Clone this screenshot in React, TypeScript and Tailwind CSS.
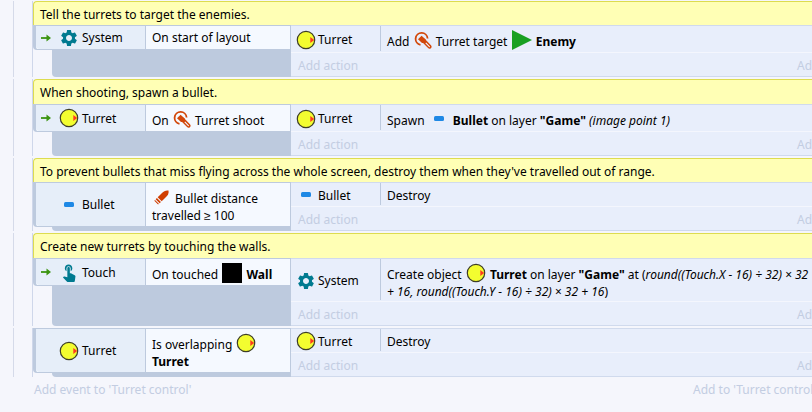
import type { ReactNode } from "react";
import { MdSettings, MdTouchApp } from "react-icons/md";

const inlineIcon = "mx-px -my-1 align-baseline";

function TurretIcon({ className = "" }: { className?: string }) {
  return (
    <svg viewBox="0 0 20 20" className={`inline-block size-5 shrink-0 ${className}`}>
      <circle cx="10" cy="10" r="8.7" fill="#f3fd30" stroke="#3d3d28" strokeWidth="1.2" />
      <path d="M14.3 7v6l4-3z" fill="#ff3b1f" />
    </svg>
  );
}

function BulletIcon({ className = "" }: { className?: string }) {
  return (
    <svg viewBox="0 0 20 20" className={`inline-block size-5 shrink-0 ${className}`}>
      <rect x="5" y="7" width="10" height="5" rx="1.5" fill="#1e88e5" />
    </svg>
  );
}

function SystemIcon() {
  return <MdSettings className="inline-block size-5 shrink-0 text-[#007a90]" />;
}

function TouchIcon() {
  return <MdTouchApp className="inline-block size-5 shrink-0 text-[#007a90]" />;
}

function TurretBehaviorIcon() {
  return (
    <svg viewBox="0 0 18 18" className={`inline-block size-[18px] ${inlineIcon}`} fill="none" stroke="#d2470a">
      <path d="M6.500 12.800A6 6 0 1 1 13.600 6.500" strokeWidth="1.8" />
      <path d="M9.500 8.500l6 6.200" strokeWidth="4" strokeLinecap="round" />
      <path d="M12 11.200l3.400 3.500" stroke="#f3f5fd" strokeWidth="1.100" strokeLinecap="round" />
      <path d="M4 7.300L7.600 3.700l4.100 3.800-.2 3.500H8z" fill="#d2470a" stroke="none" />
    </svg>
  );
}

function BulletBehaviorIcon() {
  return (
    <svg viewBox="0 0 18 18" className={`inline-block size-[18px] ${inlineIcon}`} fill="#d03e00">
      <path d="M15.500 1.500c.6 3-.8 4.800-2.500 6.500l-4.300 4.200-4-4L9 4c1.800-1.700 3.500-2.900 6.500-2.500z" />
      <path d="M3.900 9l4 4-1.200 1.200-4-4z" />
      <path d="M2 11l3.800 3.800-.7.700L1.300 11.700z" />
    </svg>
  );
}

function EnemyIcon() {
  return (
    <svg viewBox="0 0 20 20" className={`inline-block size-5 ${inlineIcon}`} fill="#18a022">
      <path d="M0 0l20 10L0 20z" />
    </svg>
  );
}

function TriggerArrow() {
  return (
    <svg viewBox="0 0 10 10" className="size-2.5" fill="none" stroke="#3b9410">
      <path d="M0 5h7" strokeWidth="1.8" />
      <path d="M5.500 1.500L10 5 5.500 8.500z" fill="#3b9410" stroke="none" />
    </svg>
  );
}

function AddButton({ children }: { children: ReactNode }) {
  return <button type="button" className="whitespace-nowrap text-[#c3cde2]">{children}</button>;
}

/* A sentence with icons in it sits a little lower in its cell. */
function Sentence({ children }: { children: ReactNode }) {
  return <div className="pt-1">{children}</div>;
}

type EventProps = {
  comment?: string;
  commentSize?: string;
  trigger?: boolean;
  conditionSize: string;
  conditionObject: ReactNode;
  condition: ReactNode;
  actionSize: string;
  actionObject: ReactNode;
  action: ReactNode;
};

function EventBlock(props: EventProps) {
  return (
    <section className="ml-[13px] border-l border-[#d5dae9] pl-[18px]">
      <div className="border-l border-[#cfd7ea]">
        {props.comment && (
          <p className={`flex items-center rounded-tl border-t border-l border-[#dddc50] bg-[#ffffb5] pt-px pl-1.5 ${props.commentSize}`}>
            {props.comment}
          </p>
        )}
        <div className="flex">
          <div className="flex w-[258px] shrink-0 flex-col border-r border-[#bdcade]">
            <div className={`flex rounded-bl border-y border-l-[3px] border-[#bdcade] bg-[#f5f9ff] ${props.conditionSize}`}>
              <div className="flex w-[110px] shrink-0 items-center rounded-bl-sm border-r border-[#bdcade] bg-[#e6eef9] pl-[5px]">
                <span className="mr-2 w-2.5">{props.trigger && <TriggerArrow />}</span>
                <span className="flex items-center gap-[3px]">{props.conditionObject}</span>
              </div>
              <div className="flex flex-1 items-center px-1.5">
                <div>{props.condition}</div>
              </div>
            </div>
            <div className="ml-[19px] flex-1 rounded-bl bg-[#bdcade]" />
          </div>
          <div className="min-w-0 flex-1 border-y border-[#d0daed] bg-[#e8eefb]">
            <div className={`flex border-b border-[#f4f6fd] ${props.actionSize}`}>
              <div className="mb-px flex w-[90px] shrink-0 items-center gap-0.5 border-r border-[#bdcade] pt-0.5 pl-[5px]">
                {props.actionObject}
              </div>
              <div className="flex flex-1 items-center px-1.5 pt-px">
                <div>{props.action}</div>
              </div>
            </div>
            <div className="flex h-[23px] items-center justify-between pt-0.5 pl-[7px]">
              <AddButton>Add action</AddButton>
              <div className="w-[39px]">
                <AddButton>Add...</AddButton>
              </div>
            </div>
          </div>
        </div>
      </div>
    </section>
  );
}

export default function App() {
  return (
    <main className="min-h-screen overflow-hidden bg-[#f5f6fc] font-['Noto_Sans',sans-serif] text-[12px] leading-[17px] text-black">
      <div className="flex w-[calc(100%+24px)] flex-col gap-0.5 pt-px">
        <EventBlock
          comment="Tell the turrets to target the enemies."
          commentSize="h-6"
          trigger
          conditionSize="h-[25px]"
          conditionObject={<><SystemIcon />System</>}
          condition="On start of layout"
          actionSize="h-[27px]"
          actionObject={<><TurretIcon />Turret</>}
          action={<Sentence>Add <TurretBehaviorIcon /> Turret target <EnemyIcon /> <b>Enemy</b></Sentence>}
        />
        <EventBlock
          comment="When shooting, spawn a bullet."
          commentSize="h-[25px]"
          trigger
          conditionSize="h-7"
          conditionObject={<><TurretIcon />Turret</>}
          condition={<Sentence>On <TurretBehaviorIcon /> Turret shoot</Sentence>}
          actionSize="h-[27px]"
          actionObject={<><TurretIcon />Turret</>}
          action={<Sentence>Spawn <BulletIcon className={inlineIcon} /> <b>Bullet</b> on layer <b>"Game"</b> <i>(image point 1)</i></Sentence>}
        />
        <EventBlock
          comment="To prevent bullets that miss flying across the whole screen, destroy them when they've travelled out of range."
          commentSize="h-6"
          conditionSize="h-[45px]"
          conditionObject={<><BulletIcon />Bullet</>}
          condition={<Sentence><BulletBehaviorIcon /> Bullet distance travelled ≥ 100</Sentence>}
          actionSize="h-6"
          actionObject={<><BulletIcon />Bullet</>}
          action="Destroy"
        />
        <EventBlock
          comment="Create new turrets by touching the walls."
          commentSize="h-[25px]"
          trigger
          conditionSize="h-7"
          conditionObject={<><TouchIcon />Touch</>}
          condition={<Sentence>On touched <span className={`inline-block size-5 bg-black ${inlineIcon}`} /> <b>Wall</b></Sentence>}
          actionSize="h-[43px]"
          actionObject={<><SystemIcon />System</>}
          action={<Sentence>Create object <TurretIcon className={inlineIcon} /> <b>Turret</b> on layer <b>"Game"</b> at (<i>round((Touch.X - 16) ÷ 32) × 32 +{"\u00a0"}16, round((Touch.Y - 16) ÷ 32) × 32 + 16</i>)</Sentence>}
        />
        <EventBlock
          conditionSize="h-[45px]"
          conditionObject={<><TurretIcon />Turret</>}
          condition={<Sentence>Is overlapping <TurretIcon className={inlineIcon} /> <b>Turret</b></Sentence>}
          actionSize="h-6"
          actionObject={<><TurretIcon />Turret</>}
          action="Destroy"
        />
        <footer className="flex justify-between pt-0.5 pl-[34px]">
          <AddButton>Add event to 'Turret control'</AddButton>
          <div className="w-[143px]">
            <AddButton>Add to 'Turret control'...</AddButton>
          </div>
        </footer>
      </div>
    </main>
  );
}
